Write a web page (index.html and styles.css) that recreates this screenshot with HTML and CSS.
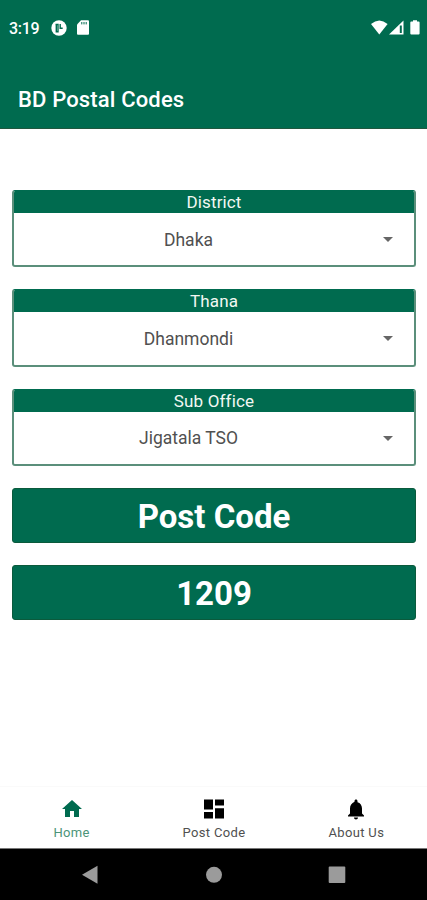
FILE: index.html
```html
<!DOCTYPE html>
<html lang="en">
<head>
    <meta charset="UTF-8">
    <meta name="viewport" content="width=device-width, initial-scale=1.0">
    <title>BD Postal Codes</title>
    <link rel="stylesheet" href="styles.css">
</head>
<body>
    <header>
        <!-- Status bar -->
        <div class="status-bar">
            <span class="time">3:19</span>
            <svg class="icon-app" width="16" height="16" viewBox="0 0 16 16">
                <circle cx="8" cy="8" r="7.7" fill="#fff"/>
                <path d="M4.500 4.500H7v7.300H5.300V4.500M9.200 4v4.300h2.500" fill="none" stroke="#006b4f" stroke-width="1.4"/>
            </svg>
            <svg class="icon-card" width="12" height="15" viewBox="0 0 12 15">
                <path d="M4 .3h7q1 0 1 1v12.4q0 1-1 1H1q-1 0-1-1V4.6z" fill="#fff"/>
                <path d="M4.8 2v2.4M7 2v2.4M9.2 2v2.4" stroke="#006b4f" stroke-width="1"/>
            </svg>
            <div class="status-right">
                <svg width="17" height="15" viewBox="0 0 17 15">
                    <path d="M0 4.1Q8.3-3 16.6 4.1L8.3 14.5z" fill="#fff"/>
                </svg>
                <svg class="icon-signal" width="15" height="15" viewBox="0 0 15 15">
                    <path d="M0 14.5L14.5.5v14z" fill="#fff"/>
                    <path d="M11.8 5.5v7.500" stroke="#006b4f" stroke-width="2"/>
                </svg>
                <svg class="icon-battery" width="10" height="15" viewBox="0 0 10 15">
                    <path d="M3 .2h4v1.300h1.600q1 0 1 1v11q0 1-1 1H1.300q-1 0-1-1v-11q0-1 1-1H3z" fill="#fff"/>
                </svg>
            </div>
        </div>
        <h1>BD Postal Codes</h1>
    </header>

    <main>
        <!-- Area selection -->
        <div class="card">
            <h2>District</h2>
            <div class="spinner">
                <span class="value">Dhaka</span>
                <span class="arrow"></span>
            </div>
        </div>

        <div class="card">
            <h2>Thana</h2>
            <div class="spinner">
                <span class="value">Dhanmondi</span>
                <span class="arrow"></span>
            </div>
        </div>

        <div class="card">
            <h2>Sub Office</h2>
            <div class="spinner">
                <span class="value">Jigatala TSO</span>
                <span class="arrow"></span>
            </div>
        </div>

        <!-- Result -->
        <div class="result">Post Code</div>
        <div class="result">1209</div>
    </main>

    <!-- Bottom navigation -->
    <nav class="tabs">
        <a class="tab active">
            <svg width="24" height="24" viewBox="0 0 24 24"><path d="M10 20v-6h4v6h5v-8h3L12 3 2 12h3v8z"/></svg>
            <span>Home</span>
        </a>
        <a class="tab">
            <svg width="24" height="24" viewBox="0 0 24 24"><path d="M2 2.5h9v10H2zM2 15h9v6.500H2zM13 2.500h9V8.500h-9zM13 11.300h9v10.200h-9z"/></svg>
            <span>Post Code</span>
        </a>
        <a class="tab">
            <svg width="24" height="24" viewBox="0 0 24 24"><path d="M12 22.500c1.100 0 2-.9 2-2h-4c0 1.100.89 2 2 2zm6-6v-5c0-3.070-1.640-5.640-4.500-6.320V4c0-.83-.67-1.500-1.500-1.500s-1.500.67-1.500 1.500v.68C7.630 5.860 6 8.420 6 11.500v5l-2 2v1h16v-1z"/></svg>
            <span>About Us</span>
        </a>
    </nav>

    <div class="system-nav">
        <svg width="18" height="20" viewBox="0 0 18 20"><path d="M16.500.8v18L1 9.800z"/></svg>
        <svg width="18" height="20" viewBox="0 0 18 20"><circle cx="9" cy="9.800" r="8"/></svg>
        <svg width="18" height="20" viewBox="0 0 18 20"><rect x=".7" y="1.500" width="16.600" height="16.500" rx="1"/></svg>
    </div>
</body>
</html>
```
FILE: styles.css
```css
/* Global Styles */
:root {
    --primary-color: #006b4f;
    --border-color: #5b8f7b;
    --text-color: #505050;
}

* {
    box-sizing: border-box;
}

body {
    display: flex;
    flex-direction: column;
    height: 900px;
    margin: 0;
    font-family: Roboto, sans-serif;
    background-color: #ffffff;
    color: var(--text-color);
}

svg {
    display: block;
    flex: none;
}

header {
    height: 129px;
    background-color: var(--primary-color);
    border-bottom: 1px solid #20573f;
    color: #ffffff;
}

.status-bar {
    display: flex;
    align-items: center;
    height: 55px;
    padding: 0 7px 0 9px;
}

.time {
    width: 42px;
    padding-top: 1px;
    font-size: 16px;
    font-weight: 500;
    letter-spacing: -0.3px;
}

.icon-card {
    margin-left: 10px;
}

.status-right {
    display: flex;
    margin-left: auto;
}

.icon-signal {
    margin-left: 1px;
}

.icon-battery {
    margin-left: 6px;
}

h1 {
    margin: 0;
    padding: 0 18px;
    font-size: 22px;
    font-weight: 500;
    letter-spacing: 0.15px;
    line-height: 90px;
}

main {
    display: flex;
    flex: 1;
    flex-direction: column;
    gap: 22px;
    padding: 61px 11px 0 12px;
}

/* Dropdown cards */
.card {
    height: 77.3px;
    overflow: hidden;
    border: 2px solid var(--border-color);
    border-top: 1px solid var(--primary-color);
    border-radius: 3px;
}

h2 {
    height: 22px;
    margin: 0 -1px;
    background-color: var(--primary-color);
    color: #f2f8f3;
    font-size: 17px;
    font-weight: 400;
    letter-spacing: 0.15px;
    line-height: 23px;
    text-align: center;
}

.spinner {
    display: flex;
    align-items: center;
    height: 53px;
    padding-right: 21px;
}

.value {
    flex: 1;
    padding-right: 20px;
    font-size: 17.5px;
    text-align: center;
}

.arrow {
    border: 5px solid transparent;
    border-top-color: #666666;
    border-bottom: 0;
}

.result {
    height: 55px;
    background-color: var(--primary-color);
    border: 1px solid #0b5a3c;
    border-radius: 3px;
    color: #ffffff;
    font-size: 33px;
    font-weight: 700;
    line-height: 55px;
    text-align: center;
}

/* Bottom navigation */
.tabs {
    display: flex;
    height: 62px;
    border-top: 1px solid #fafafa;
}

.tab {
    display: flex;
    flex: 1;
    flex-direction: column;
    align-items: center;
    gap: 4px;
    padding: 10px 0 0 1px;
    font-size: 13px;
    letter-spacing: 0.35px;
}

.tab svg {
    fill: #000000;
}

.tab.active {
    color: #4b9479;
}

.tab.active svg {
    fill: var(--primary-color);
}

.system-nav {
    display: flex;
    align-items: center;
    justify-content: space-between;
    height: 52px;
    padding: 0 81px;
    background-color: #000000;
    border-top: 1px solid #777777;
}

.system-nav svg {
    fill: #9b9b9b;
}
```
